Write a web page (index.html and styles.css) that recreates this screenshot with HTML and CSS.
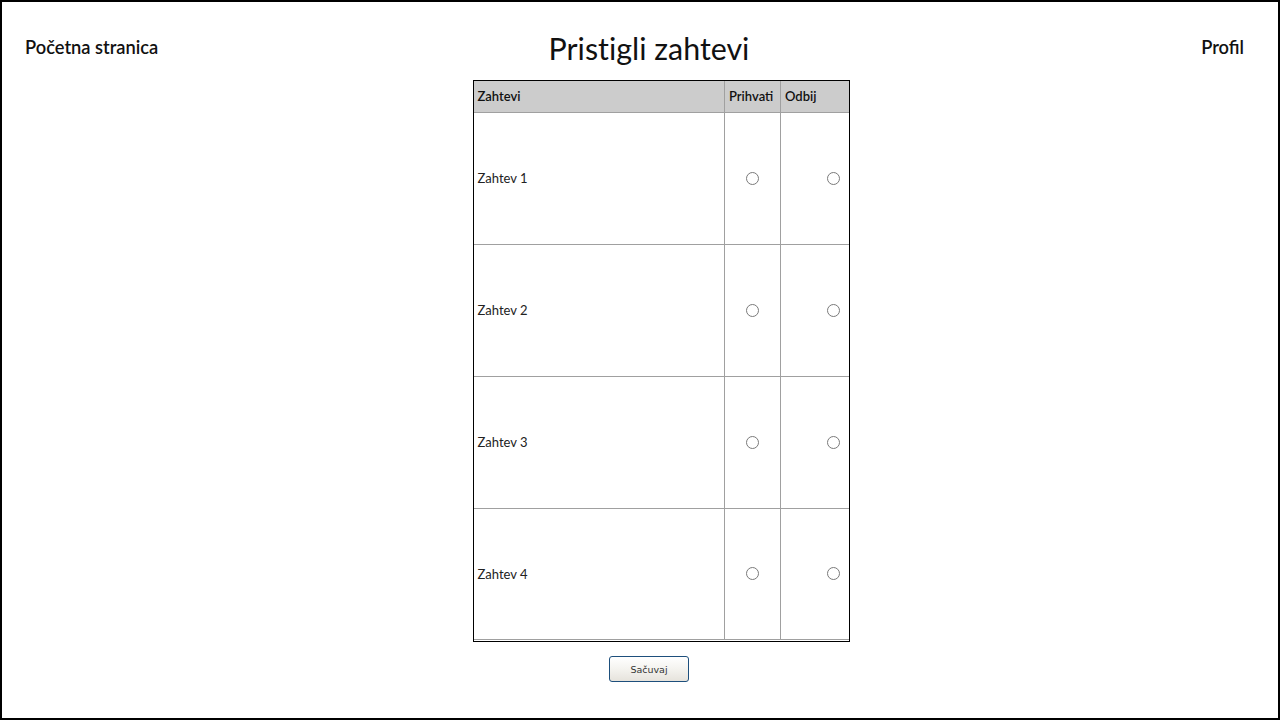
FILE: index.html
```html
<!DOCTYPE html>
<html lang="sr">
<head>
<meta charset="utf-8">
<title>Pristigli zahtevi</title>
<link rel="stylesheet" href="styles.css">
</head>
<body>
<div class="frame">
  <header class="topbar">
    <a class="nav-link nav-left" href="#">Početna stranica</a>
    <h1 class="title">Pristigli zahtevi</h1>
    <a class="nav-link nav-right" href="#">Profil</a>
  </header>
  <main class="content">
    <div class="table-box">
      <table class="requests">
        <colgroup>
          <col class="c-name">
          <col class="c-accept">
          <col class="c-reject">
        </colgroup>
        <thead>
          <tr><th>Zahtevi</th><th>Prihvati</th><th>Odbij</th></tr>
        </thead>
        <tbody>
          <tr><td>Zahtev 1</td><td class="center"><input type="radio" name="r1" class="radio"></td><td class="right"><input type="radio" name="r1" class="radio"></td></tr>
          <tr><td>Zahtev 2</td><td class="center"><input type="radio" name="r2" class="radio"></td><td class="right"><input type="radio" name="r2" class="radio"></td></tr>
          <tr><td>Zahtev 3</td><td class="center"><input type="radio" name="r3" class="radio"></td><td class="right"><input type="radio" name="r3" class="radio"></td></tr>
          <tr class="last"><td>Zahtev 4</td><td class="center"><input type="radio" name="r4" class="radio"></td><td class="right"><input type="radio" name="r4" class="radio"></td></tr>
        </tbody>
      </table>
    </div>
    <button class="save" type="button">Sačuvaj</button>
  </main>
</div>
</body>
</html>
```

FILE: styles.css
```css
* { box-sizing: border-box; }
html, body { margin: 0; padding: 0; background: #fff; }
body { font-family: Lato, "Liberation Sans", sans-serif; color: #111; }

.frame {
  width: 1280px;
  height: 720px;
  border: 2px solid #000;
  overflow: hidden;
}

.topbar {
  display: grid;
  grid-template-columns: 1fr auto 1fr;
  align-items: start;
  padding: 28px 34px 0 23px;
}

.nav-link {
  font-size: 18.3px;
  font-weight: 600;
  line-height: 22px;
  color: #111;
  text-decoration: none;
  margin-top: 6px;
}
.nav-left { justify-self: start; }
.nav-right { justify-self: end; }

.title {
  margin: 0;
  padding-left: 29px;
  font-size: 30.4px;
  font-weight: 400;
  line-height: 36px;
  color: #111;
  font-variant-ligatures: none;
}

.content {
  display: flex;
  flex-direction: column;
  align-items: center;
  padding-left: 18px;
}

.table-box {
  margin-top: 14px;
  margin-left: 24px;
  width: 377px;
  height: 562px;
  border: 1px solid #000;
}

.requests {
  width: 375px;
  border-collapse: collapse;
  table-layout: fixed;
  font-size: 13px;
}
.c-name { width: 251px; }
.c-accept { width: 56px; }
.c-reject { width: 68px; }

.requests th,
.requests td {
  border-left: 1px solid #a0a0a0;
  border-bottom: 1px solid #a0a0a0;
  padding: 0 4px;
  text-align: left;
  vertical-align: middle;
}
.requests th:first-child,
.requests td:first-child { border-left: none; }

.requests th {
  background: #cccccc;
  height: 31px;
  font-weight: 600;
  color: #111;
}
.requests td {
  height: 132px;
  color: #222;
}
.requests tr.last td { height: 131px; }

.requests td.center { text-align: center; padding: 0; }
.requests td.right { text-align: right; padding: 0 9px 0 0; }

.radio {
  appearance: none;
  -webkit-appearance: none;
  width: 13px;
  height: 13px;
  margin: 0 0 2px 0;
  border: 1px solid #7a7a7a;
  border-radius: 50%;
  background: #fff;
  vertical-align: middle;
}

.save {
  margin-top: 14px;
  width: 80px;
  height: 26px;
  border: 1px solid #1d4f7c;
  border-radius: 3px;
  background: linear-gradient(#ffffff, #f4f3ef 50%, #e6e3dc);
  font-family: "DejaVu Sans", Verdana, sans-serif;
  font-size: 9.5px;
  font-weight: 400;
  color: #333;
  padding: 0;
}
```
